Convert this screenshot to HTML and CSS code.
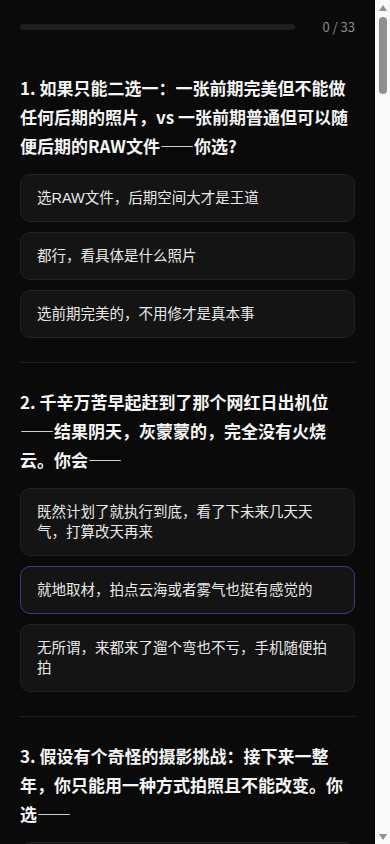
FILE: index.html
```html
<!DOCTYPE html>
<html lang="zh-CN">
<head>
    <meta charset="UTF-8">
    <meta name="viewport" content="width=device-width, initial-scale=1.0">
    <title>摄影人格测试</title>
    <link rel="stylesheet" href="styles.css">
</head>
<body>
    <div class="quiz">
        <!-- Progress header -->
        <div class="progress-header">
            <div class="progress-track"><div class="progress-fill" id="progressFill" style="width: 0%;"></div></div>
            <div class="progress-count" id="progressCount">0 / 33</div>
        </div>

        <div id="questionList"></div>
    </div>

    <!-- Scroll rail -->
    <div class="scroll-rail" aria-hidden="true">
        <div class="rail-arrow">
            <svg width="8" height="6" viewBox="0 0 8 6"><polygon points="4,0 8,6 0,6" fill="#8f8f8f"/></svg>
        </div>
        <div class="rail-track" id="railTrack">
            <div class="rail-thumb" id="railThumb"></div>
        </div>
        <div class="rail-arrow">
            <svg width="8" height="6" viewBox="0 0 8 6"><polygon points="0,0 8,0 4,6" fill="#8f8f8f"/></svg>
        </div>
    </div>

    <script src="app.js"></script>
</body>
</html>
```

FILE: styles.css
```css
/* Page base */
html {
    scrollbar-width: none;
}

body {
    margin: 0;
    padding-right: 15px;
    background-color: #0a0a0a;
    color: #f2f2f2;
    font-family: "Noto Sans CJK SC", "Noto Sans", sans-serif;
}

.quiz {
    padding: 0 20px 40px;
}

/* Progress header */
.progress-header {
    position: sticky;
    top: 0;
    display: flex;
    align-items: center;
    gap: 12px;
    padding: 18px 0 14px;
    background-color: #0a0a0a;
    z-index: 2;
}

.progress-track {
    flex: 1;
    height: 6px;
    border-radius: 3px;
    background-color: #1f1f1f;
    overflow: hidden;
}

.progress-fill {
    height: 100%;
    background-color: #6366f1;
    transition: width 0.3s;
}

.progress-count {
    width: 48px;
    text-align: right;
    font-size: 13px;
    line-height: 17px;
    color: #8a8a8a;
}

/* Question blocks */
.question {
    padding: 24px 0;
    border-bottom: 1px solid #222;
}

.question-title {
    margin: 0 0 14px;
    font-size: 17px;
    font-weight: 700;
    line-height: 29px;
    color: #f5f5f5;
}

.options {
    display: flex;
    flex-direction: column;
    gap: 10px;
}

.option-btn {
    display: block;
    width: 100%;
    padding: 13px 16px;
    text-align: left;
    font-family: "Liberation Sans", "Noto Sans CJK SC", sans-serif;
    font-size: 14.5px;
    line-height: 20px;
    color: #e8e8e8;
    background-color: #141414;
    border: 1px solid #222;
    border-radius: 10px;
    cursor: pointer;
}

.option-btn:hover {
    background-color: #1a1a1a;
}

.option-btn.selected {
    border-color: #3a3b8e;
}

/* Scroll rail */
.scroll-rail {
    position: fixed;
    top: 0;
    right: 0;
    bottom: 0;
    width: 15px;
    display: flex;
    flex-direction: column;
    background-color: #f9f9f9;
    z-index: 5;
}

.rail-arrow {
    height: 15px;
    display: flex;
    align-items: center;
    justify-content: center;
}

.rail-track {
    flex: 1;
    padding: 2px 0;
}

.rail-thumb {
    width: 8px;
    height: 60px;
    margin: 0 auto;
    border-radius: 4px;
    background-color: #8f8f8f;
}
```

FILE: app.js
```js
// Question data
var questions = [
    { title: "如果只能二选一：一张前期完美但不能做任何后期的照片，vs 一张前期普通但可以随便后期的RAW文件——你选?",
      options: ["选RAW文件，后期空间大才是王道", "都行，看具体是什么照片", "选前期完美的，不用修才是真本事"] },
    { title: "千辛万苦早起赶到了那个网红日出机位——结果阴天，灰蒙蒙的，完全没有火烧云。你会——",
      options: ["既然计划了就执行到底，看了下未来几天天气，打算改天再来", "就地取材，拍点云海或者雾气也挺有感觉的", "无所谓，来都来了遛个弯也不亏，手机随便拍拍"] },
    { title: "假设有个奇怪的摄影挑战：接下来一整年，你只能用一种方式拍照且不能改变。你选——",
      options: ["只用一支定焦镜头，走哪拍哪", "只用手机，随时随地记录", "只拍黑白，专注光影和构图"] },
    { title: "出门旅行，你的相机包里通常装着——",
      options: ["机身加两三支镜头，外加三脚架", "一机一镜，轻装上阵", "什么都不带，手机足够了"] },
    { title: "看到一张特别惊艳的照片，你第一反应是——",
      options: ["研究参数和后期，想自己也拍一张", "点个赞，收藏起来慢慢看", "好看是好看，但和我没什么关系"] },
    { title: "朋友让你帮忙拍合照，结果大家都说不好看，你会——",
      options: ["重新调整构图和光线，再来几张", "笑着说是你们自己的问题", "把手机还回去，下次不接这活了"] },
    { title: "你更喜欢在什么时间出门拍照?",
      options: ["日出日落的黄金时刻", "蓝调时刻和夜晚", "什么时候有空就什么时候"] },
    { title: "对于“器材党”这个说法，你怎么看?",
      options: ["好器材确实能出好片", "器材够用就行，关键在人", "我就是器材党，怎么了"] },
    { title: "拍完一组照片回家，你通常——",
      options: ["当晚就导入电脑开始挑片修图", "放几天再说，等有心情了再整理", "存卡里就忘了，直到卡满"] },
    { title: "面对陌生人拍摄，你——",
      options: ["主动上前沟通，征得同意再拍", "偷偷抓拍，自然才最真实", "不拍陌生人，太尴尬了"] },
    { title: "你的照片最常发在哪里?",
      options: ["专门的摄影社区", "朋友圈或者社交平台", "哪都不发，自己留着看"] },
    { title: "别人评价你的照片“修得太过了”，你会——",
      options: ["认真反思，调整后期风格", "我就喜欢这种风格", "不太在意，拍照是自己的事"] },
    { title: "下雨天你会——",
      options: ["带上防雨罩出门拍倒影", "在窗边拍拍雨滴", "宅在家里，等天晴再说"] },
    { title: "你拍得最多的题材是——",
      options: ["风光和城市", "人像和街头", "美食、宠物和日常"] },
    { title: "如果相机突然坏了，你——",
      options: ["立刻下单新的，一天都等不了", "先用手机凑合，慢慢修", "正好歇一歇"] },
    { title: "构图时你更依赖——",
      options: ["三分法、引导线这些规则", "直觉，看着舒服就按快门", "先拍了再说，后期再裁"] },
    { title: "对于滤镜和预设，你——",
      options: ["自己调色，很少用别人的预设", "常用几个喜欢的预设", "相机直出，懒得调"] },
    { title: "拍一张照片你一般按几次快门?",
      options: ["一张，想好了再按", "三五张，挑最好的", "连拍几十张再说"] },
    { title: "去一个景点，人特别多，你会——",
      options: ["等到人少或者换个角度", "把人群也当成画面的一部分", "随便拍一张打卡就走"] },
    { title: "你怎么看待摄影比赛?",
      options: ["积极参加，想获得认可", "偶尔投投稿", "从不参加"] },
    { title: "你更喜欢哪种光线?",
      options: ["硬朗的直射光", "柔和的阴天散射光", "没注意过"] },
    { title: "有人问你借相机，你——",
      options: ["教他怎么用再借", "直接借，放心", "委婉拒绝"] },
    { title: "你会为了拍一张照片专门去一个地方吗?",
      options: ["会，而且会提前做攻略", "看情况，顺路就去", "不会，拍照只是顺便"] },
    { title: "翻看自己几年前的照片，你的感受是——",
      options: ["那时候拍得真差，进步了很多", "挺怀念的，有当时的味道", "基本不会去翻"] },
    { title: "你的相机设置通常是——",
      options: ["全手动模式", "光圈或快门优先", "全自动"] },
    { title: "关于胶片摄影，你——",
      options: ["正在玩，很喜欢", "想试试但还没开始", "没兴趣"] },
    { title: "拍人像时你更注重——",
      options: ["光线和氛围", "表情和情绪", "好看就行"] },
    { title: "你会给自己的照片起标题吗?",
      options: ["每张都会认真起", "偶尔兴致来了才起", "从来不起"] },
    { title: "别人夸你拍得好，你会说——",
      options: ["谢谢，我修了很久", "主要是相机好", "随手拍的"] },
    { title: "你理想中的摄影生活是——",
      options: ["走遍世界，拍下每一处风景", "记录身边人和日常的温度", "轻松随意，不给自己压力"] },
    { title: "看到一个好画面但没带相机，你——",
      options: ["非常懊恼，记下位置改天再来", "拿手机拍下来", "用眼睛记住就好"] },
    { title: "你更愿意把钱花在——",
      options: ["新镜头和新器材", "旅行和拍摄机会", "学习课程和书籍"] },
    { title: "如果用一个词形容你和摄影的关系——",
      options: ["热爱", "陪伴", "消遣"] }
];

var answers = {};
var list = document.getElementById("questionList");

// Build question blocks
questions.forEach(function(q, qi) {
    var block = document.createElement("div");
    block.className = "question";

    var title = document.createElement("h2");
    title.className = "question-title";
    title.textContent = (qi + 1) + ". " + q.title;
    block.appendChild(title);

    var opts = document.createElement("div");
    opts.className = "options";
    q.options.forEach(function(text, oi) {
        var btn = document.createElement("button");
        btn.type = "button";
        btn.className = "option-btn";
        btn.textContent = text;
        btn.addEventListener("click", function() {
            answers[qi] = oi;
            opts.querySelectorAll(".option-btn").forEach(function(b) {
                b.classList.remove("selected");
            });
            btn.classList.add("selected");
            updateProgress();
        });
        opts.appendChild(btn);
    });
    block.appendChild(opts);
    list.appendChild(block);
});

// highlighted option from the screenshot
list.children[1].querySelectorAll(".option-btn")[1].classList.add("selected");

function updateProgress() {
    var done = Object.keys(answers).length;
    document.getElementById("progressCount").textContent = done + " / " + questions.length;
    document.getElementById("progressFill").style.width = (done / questions.length * 100) + "%";
}

// Keep the rail thumb in step with the page
function updateRail() {
    var track = document.getElementById("railTrack");
    var thumb = document.getElementById("railThumb");
    var room = track.clientHeight - 4;
    var total = document.documentElement.scrollHeight;
    var view = window.innerHeight;
    var size = Math.max(20, Math.round(room * view / total));
    var maxScroll = Math.max(1, total - view);
    thumb.style.height = size + "px";
    thumb.style.marginTop = Math.round((room - size) * window.scrollY / maxScroll) + "px";
}

window.addEventListener("scroll", updateRail);
window.addEventListener("resize", updateRail);
updateRail();
```
